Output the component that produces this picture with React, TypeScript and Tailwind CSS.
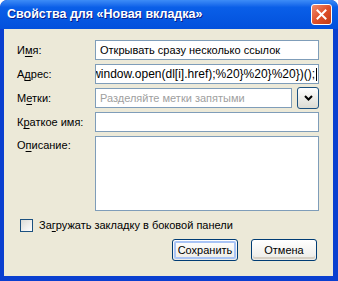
import type { ReactNode } from 'react'

const font = { fontFamily: '"Liberation Sans", Arial, sans-serif' }

const Label = ({ before, k, after }: { before: string; k: string; after: string }) => (
  <span className='text-[11px] leading-[20px] text-black whitespace-nowrap'>
    {before}
    <span className='underline underline-offset-2'>{k}</span>
    {after}
  </span>
)

const Row = ({ label, children }: { label: ReactNode; children: ReactNode }) => (
  <div className='flex items-start'>
    <div className='w-[78px] shrink-0 h-[20px] flex items-center'>{label}</div>
    <div className='flex-1 min-w-0 flex items-center gap-[5px]'>{children}</div>
  </div>
)

const Input = ({ children, className = '' }: { children?: ReactNode; className?: string }) => (
  <div className={`h-[20px] min-w-0 bg-white border border-[#7f9db9] flex items-center px-[4px] overflow-hidden text-[11px] whitespace-nowrap ${className}`}>
    {children}
  </div>
)

const XpButton = ({ text, def }: { text: string; def?: boolean }) => (
  <div className='w-[66px] h-[22px] rounded-[3px] border border-[#003c74] bg-gradient-to-b from-white to-[#ecebe6] p-[1px]'>
    <div
      className={`h-full rounded-[2px] flex items-center justify-center text-[11px] text-black ${
        def ? 'shadow-[inset_0_0_0_2px_#a9c4f5]' : 'shadow-[inset_0_-2px_0_#d6d0c5]'
      }`}
    >
      {text}
    </div>
  </div>
)

export default function App() {
  return (
    <div style={font} className='w-[338px] h-[281px] bg-[#0a3fd0] rounded-t-[7px] flex flex-col overflow-hidden'>
      {/* title bar */}
      <div className='h-[29px] shrink-0 flex items-center justify-between pl-[7px] pr-[6px] bg-gradient-to-b from-[#3d8cf7] via-[#0a5fe8] via-[25%] to-[#0350dc] rounded-t-[7px]'>
        <span className='text-white font-bold text-[12.5px] [text-shadow:1px_1px_0_#0a1e8a]'>
          Свойства для «Новая вкладка»
        </span>
        <div className='w-[21px] h-[21px] rounded-[3px] border border-white bg-gradient-to-br from-[#f08a6c] via-[#e0502a] to-[#c23b14] flex items-center justify-center'>
          <svg width='11' height='11' viewBox='0 0 11 11'>
            <path d='M1.5 1.5 L9.5 9.5 M9.5 1.5 L1.5 9.5' stroke='white' strokeWidth='2' strokeLinecap='square' />
          </svg>
        </div>
      </div>

      {/* body */}
      <div className='flex-1 ml-[4px] mr-[5px] mb-[5px] bg-[#ece9d8] pt-[11px] pl-[13px] pr-[14px] flex flex-col'>
        <div className='flex flex-col gap-[4px]'>
          <Row label={<Label before='И' k='м' after='я:' />}>
            <Input className='flex-1'>Открывать сразу несколько ссылок</Input>
          </Row>
          <Row label={<Label before='А' k='д' after='рес:' />}>
            <Input className='flex-1 justify-end !px-[1px]'>
              <span className='shrink-0 text-[12px]'>
                window.open(dl[i].href);%20{'}'}%20{'}'}%20{'}'})();
              </span>
              <span className='inline-block w-[1px] h-[13px] bg-black ml-[1px] shrink-0' />
            </Input>
          </Row>
          <Row label={<Label before='М' k='е' after='тки:' />}>
            <Input className='flex-1 text-[#a0a0a0]'>Разделяйте метки запятыми</Input>
            <div className='w-[22px] h-[22px] -my-[1px] shrink-0 rounded-[3px] border border-[#1c5180] bg-gradient-to-b from-white to-[#dcdcd4] flex items-center justify-center'>
              <svg width='9' height='6' viewBox='0 0 9 6'>
                <path d='M1 1 L4.5 4.5 L8 1' stroke='black' strokeWidth='2' fill='none' />
              </svg>
            </div>
          </Row>
          <Row label={<Label before='К' k='р' after='аткое имя:' />}>
            <Input className='flex-1' />
          </Row>
          <div className='flex items-start'>
            <div className='w-[78px] shrink-0 h-[17px] flex items-center'>
              <Label before='О' k='п' after='исание:' />
            </div>
            <div className='flex-1 h-[75px] bg-white border border-[#7f9db9]' />
          </div>
        </div>

        <div className='flex items-center mt-[4px] pl-[3px] gap-[6px]'>
          <div className='w-[13px] h-[13px] border border-[#1c5180] bg-gradient-to-br from-[#dcdcd7] to-white' />
          <Label before='За' k='г' after='ружать закладку в боковой панели' />
        </div>

        <div className='flex justify-end gap-[13px] mt-[4px] mr-[2px]'>
          <XpButton text='Сохранить' def />
          <XpButton text='Отмена' />
        </div>
      </div>
    </div>
  )
}
